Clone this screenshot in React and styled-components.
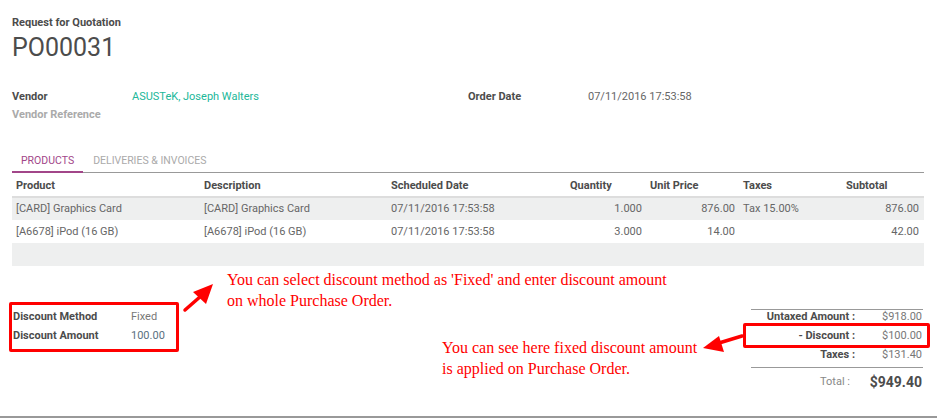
import React from 'react'
import styled, { createGlobalStyle } from 'styled-components'

const GlobalStyle = createGlobalStyle`
  html, body { margin: 0; padding: 0; background: #fff; }
  body { font-family: Roboto, "Liberation Sans", sans-serif; font-size: 11px; color: #4c4c4c; }
  * { box-sizing: border-box; }
`

const Sheet = styled.div`
  position: relative;
  width: 937px;
  height: 418px;
  padding: 16px 13px 0 12px;
  border-bottom: 2px solid #999;
`
const SubTitle = styled.div`
  font-weight: bold;
  line-height: 14px;
`
const Name = styled.div`
  font-size: 25px;
  line-height: 30px;
  margin-top: 3px;
`
const InfoGrid = styled.div`
  display: grid;
  grid-template-columns: 120px 336px 120px 1fr;
  grid-auto-rows: 18px;
  align-items: center;
  margin-top: 24px;
`
const Label = styled.div`
  font-weight: bold;
  color: ${p => (p.muted ? '#aaa' : '#4c4c4c')};
`
const Value = styled.div`
  color: ${p => (p.link ? '#21b799' : '#666')};
`
const Tabs = styled.div`
  display: flex;
  margin-top: 27px;
  border-bottom: 1px solid #999;
`
const Tab = styled.div`
  padding: 0 9px;
  font-size: 10.5px;
  line-height: 21px;
  text-transform: uppercase;
  color: ${p => (p.active ? '#a24689' : '#aaa')};
  border-bottom: 2px solid ${p => (p.active ? '#a24689' : 'transparent')};
  margin-bottom: -1px;
  margin-right: ${p => (p.active ? '1px' : '0')};
`
const Table = styled.table`
  width: 912px;
  border-collapse: collapse;
  table-layout: fixed;
`
const Th = styled.th`
  text-align: left;
  font-weight: bold;
  height: 24px;
  padding: 1px 4px 0 4px;
  border-bottom: 2px solid #ddd;
`
const Tr = styled.tr`
  background: ${p => (p.odd ? '#eeefef' : '#fff')};
`
const Td = styled.td`
  height: 23px;
  padding: 0 ${p => (p.last ? '5px' : '4px')} 1px 4px;
  color: #666;
  text-align: ${p => (p.num ? 'right' : 'left')};
  white-space: nowrap;
`
const Bottom = styled.div`
  display: flex;
  justify-content: space-between;
  align-items: flex-start;
  margin-top: 36px;
`
const DiscountBox = styled.div`
  display: grid;
  grid-template-columns: 118px auto;
  grid-auto-rows: 19px;
  align-items: center;
  width: 170px;
  margin-left: -3px;
  padding: 2px 0 4px 1px;
  border: 3px solid #f00;
  border-radius: 2px;
`
const DLabel = styled.div`
  font-weight: bold;
  color: #4c4c4c;
`
const DValue = styled.div`
  color: ${p => (p.blue ? '#5a7080' : '#777')};
`
const Totals = styled.div`
  width: 172px;
  margin-top: 7px;
  margin-right: 1px;
  border-top: 1px solid #999;
`
const TRow = styled.div`
  position: relative;
  display: grid;
  grid-template-columns: 108px 1fr;
  line-height: 14px;
  padding-bottom: 5px;
  &::after {
    content: '';
    display: ${p => (p.boxed ? 'block' : 'none')};
    position: absolute;
    left: -8px;
    right: -7px;
    top: -6px;
    bottom: 0px;
    border: 3px solid #f00;
    border-radius: 2px;
  }
`
const TLabel = styled.div`
  text-align: right;
  font-weight: bold;
  padding-right: 4px;
`
const TValue = styled.div`
  text-align: right;
  color: #777;
  padding-right: 1px;
`
const TotalRow = styled.div`
  display: grid;
  grid-template-columns: 108px 1fr;
  align-items: center;
  border-top: 1px solid #999;
  padding-top: 3px;
  height: 25px;
`
const TotalLabel = styled.div`
  text-align: right;
  color: #888;
  padding-right: 9px;
`
const TotalValue = styled.div`
  text-align: right;
  font-size: 14px;
  font-weight: bold;
  padding-right: 1px;
`
const Note = styled.div`
  position: absolute;
  left: ${p => p.x}px;
  top: ${p => p.y}px;
  font-family: "Liberation Serif", "Times New Roman", serif;
  font-size: 16px;
  line-height: 21px;
  color: #f00;
  white-space: nowrap;
`
const Overlay = styled.svg`
  position: absolute;
  left: 0;
  top: 0;
  pointer-events: none;
`

const rows = [
  ['[CARD] Graphics Card', '[CARD] Graphics Card', '07/11/2016 17:53:58', '1.000', '876.00', 'Tax 15.00%', '876.00'],
  ['[A6678] iPod (16 GB)', '[A6678] iPod (16 GB)', '07/11/2016 17:53:58', '3.000', '14.00', '', '42.00'],
]
const widths = [188, 187, 179, 80, 93, 103, 82]
const heads = ['Product', 'Description', 'Scheduled Date', 'Quantity', 'Unit Price', 'Taxes', 'Subtotal']

const App = () => {
  return (
    <>
      <GlobalStyle />
      <Sheet>
        <SubTitle>Request for Quotation</SubTitle>
        <Name>PO00031</Name>
        <InfoGrid>
          <Label>Vendor</Label>
          <Value link>ASUSTeK, Joseph Walters</Value>
          <Label>Order Date</Label>
          <Value>07/11/2016 17:53:58</Value>
          <Label muted>Vendor Reference</Label>
        </InfoGrid>
        <Tabs>
          <Tab active>Products</Tab>
          <Tab>Deliveries &amp; Invoices</Tab>
        </Tabs>
        <Table>
          <colgroup>
            {widths.map((w, i) => <col key={i} style={{ width: w }} />)}
          </colgroup>
          <thead>
            <tr>{heads.map(h => <Th key={h}>{h}</Th>)}</tr>
          </thead>
          <tbody>
            {rows.map((r, i) => (
              <Tr key={i} odd={i % 2 === 0}>
                {r.map((c, j) => (
                  <Td key={j} num={j === 3 || j === 4 || j === 6} last={j === 6}>{c}</Td>
                ))}
              </Tr>
            ))}
            <Tr odd><Td colSpan={7} /></Tr>
          </tbody>
        </Table>
        <Bottom>
          <DiscountBox>
            <DLabel>Discount Method</DLabel>
            <DValue>Fixed</DValue>
            <DLabel>Discount Amount</DLabel>
            <DValue blue>100.00</DValue>
          </DiscountBox>
          <Totals>
            <TRow><TLabel>Untaxed Amount :</TLabel><TValue>$918.00</TValue></TRow>
            <TRow boxed><TLabel>- Discount :</TLabel><TValue>$100.00</TValue></TRow>
            <TRow><TLabel>Taxes :</TLabel><TValue>$131.40</TValue></TRow>
            <TotalRow><TotalLabel>Total :</TotalLabel><TotalValue>$949.40</TotalValue></TotalRow>
          </Totals>
        </Bottom>
        <Note x={227} y={269}>
          You can select discount method as 'Fixed' and enter discount amount<br />
          on whole Purchase Order.
        </Note>
        <Note x={442} y={337}>
          You can see here fixed discount amount<br />
          is applied on Purchase Order.
        </Note>
        <Overlay width="937" height="418">
          <line x1="185" y1="310" x2="201" y2="296" stroke="#f00" strokeWidth="3.5" strokeLinecap="round" />
          <polygon points="213,284 193,292 206,304" fill="#f00" />
          <line x1="742" y1="336" x2="719" y2="343" stroke="#f00" strokeWidth="3.5" strokeLinecap="round" />
          <polygon points="703,348 719,336 724,352" fill="#f00" />
        </Overlay>
      </Sheet>
    </>
  )
}
export default App
